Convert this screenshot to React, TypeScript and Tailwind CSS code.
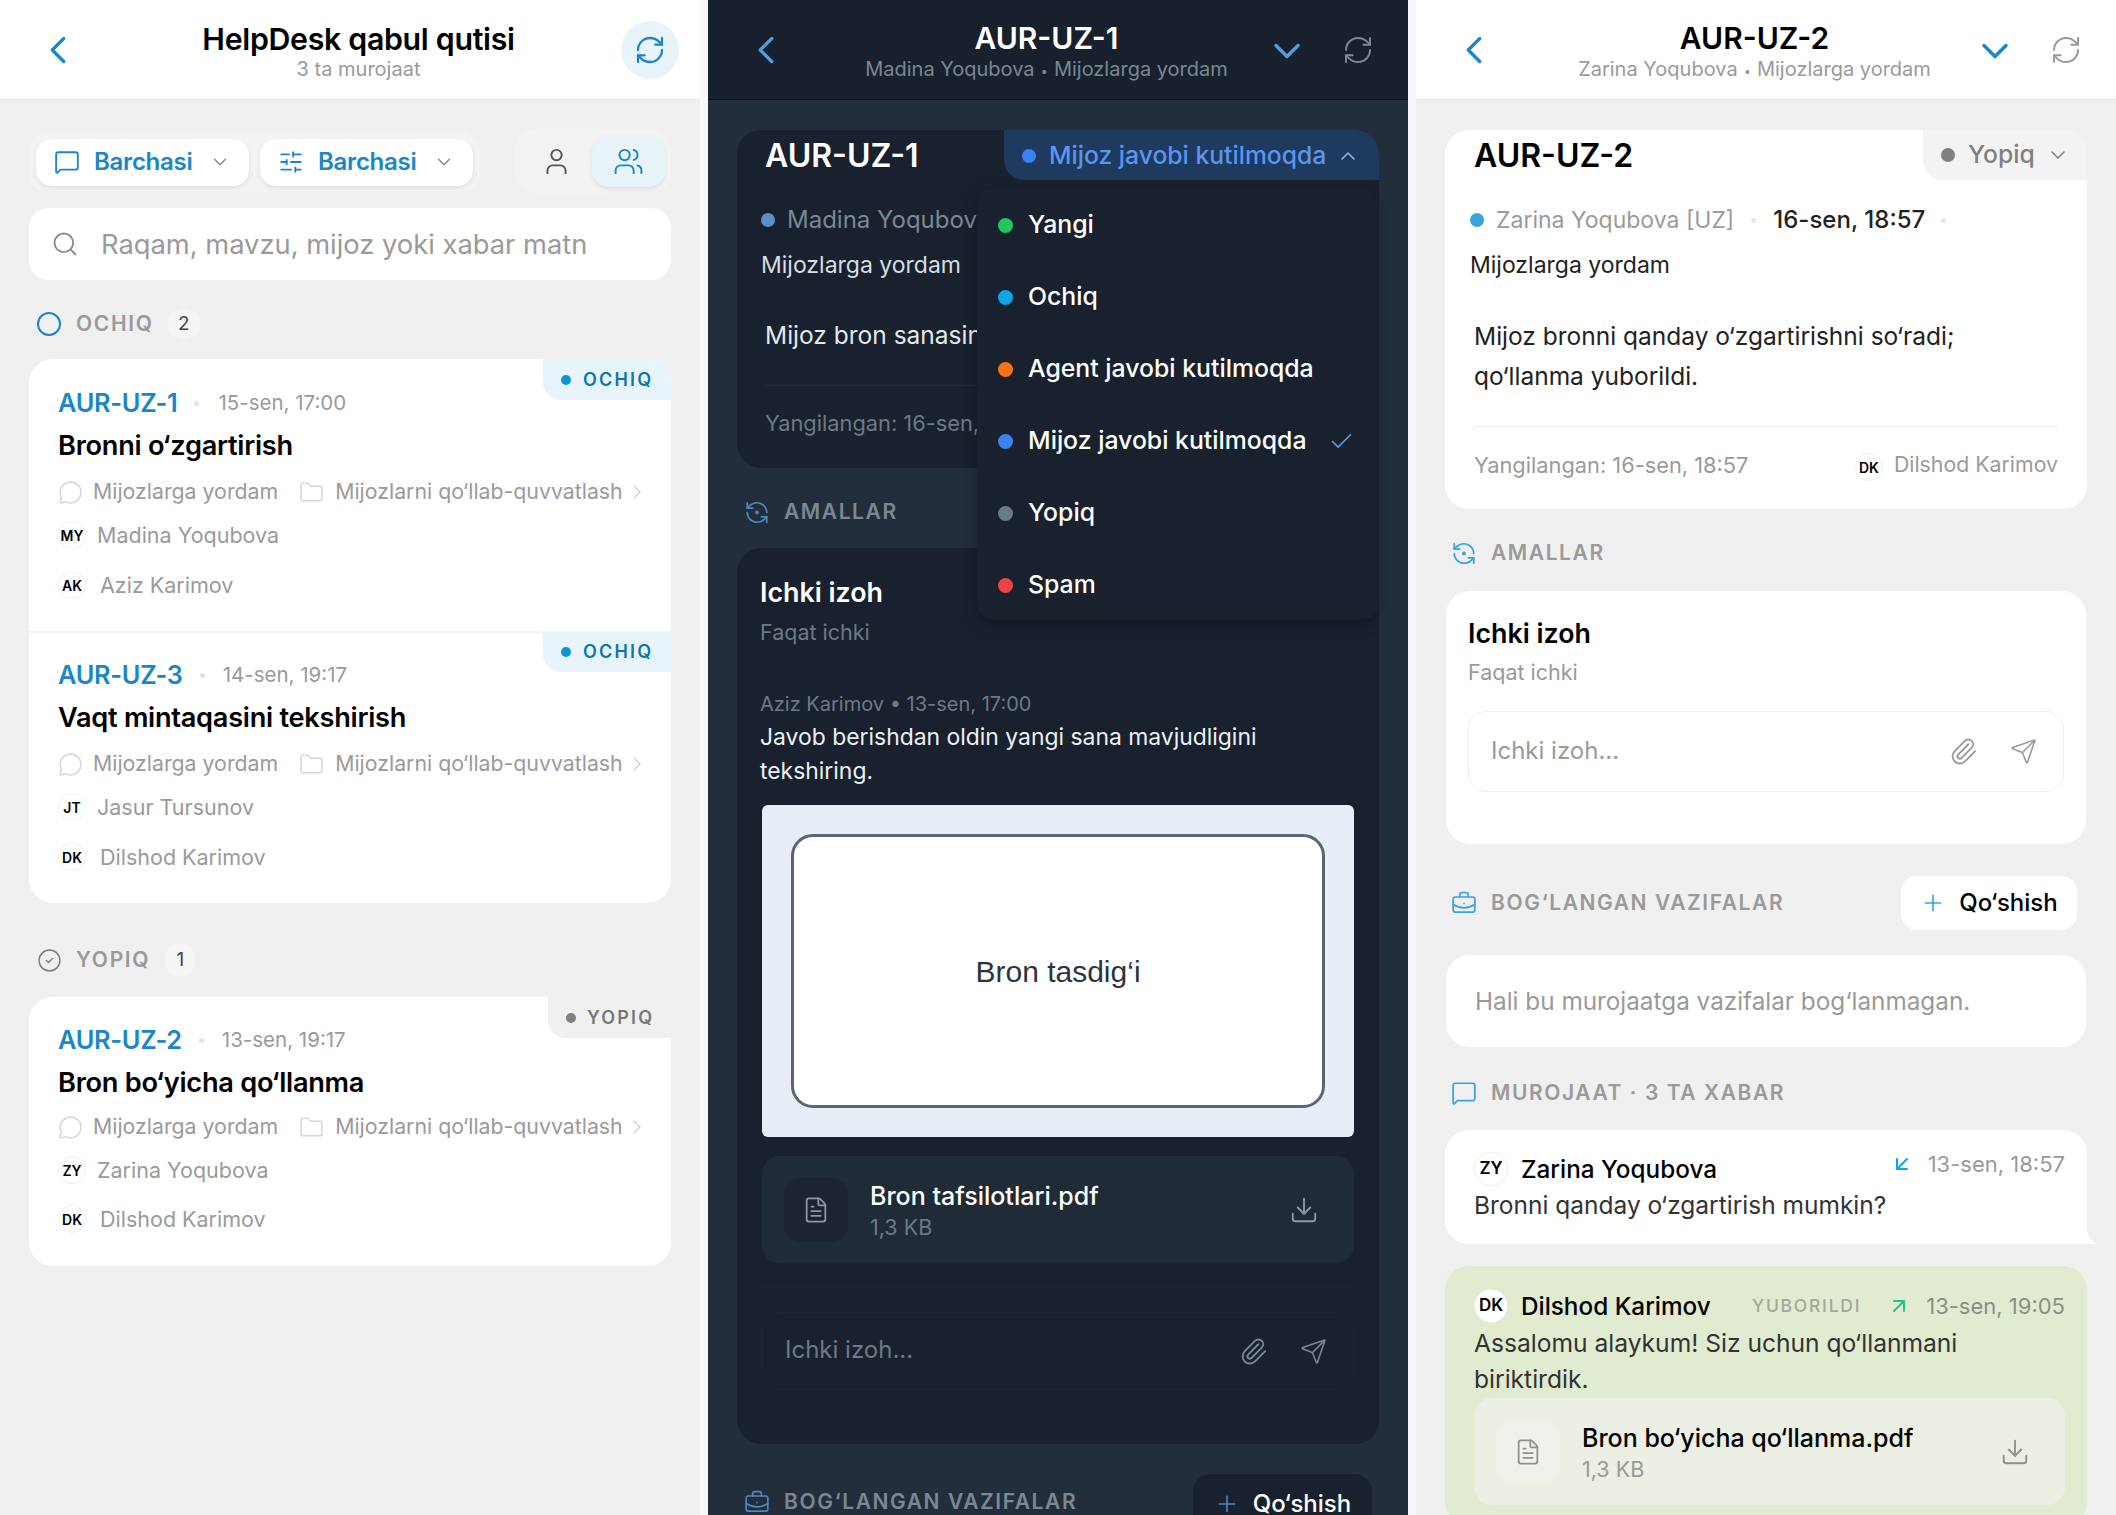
import React from "react";
import {
  ChevronLeft, ChevronDown, ChevronUp, ChevronRight, RefreshCw, MessageSquare, SlidersHorizontal, User, Users, Search,
  MessageCircle, Folder, CircleCheck, RefreshCcwDot, BriefcaseBusiness, Plus, Paperclip, Send, Download, FileText, Check,
  ArrowDownLeft, ArrowUpRight,
} from "lucide-react";

const F = "font-['Inter',sans-serif]";

function Avatar({ t, big }: { t: string; big?: boolean }) {
  return (
    <span className={big
      ? "flex h-[34px] w-[34px] shrink-0 items-center justify-center rounded-full border border-[#eeeeee] bg-white text-[17px] font-semibold text-black"
      : "flex h-[28px] w-[28px] shrink-0 items-center justify-center rounded-full border border-[#f0f0f0] bg-white text-[14px] font-semibold text-black"}>
      {t}
    </span>
  );
}

function Ticket(p: { id: string; date: string; dotGap: string; title: string; a: string; an: string; b: string; bn: string; closed?: boolean; top?: boolean }) {
  return (
    <div className={"relative h-[272px] " + (p.closed ? "pt-[25px] " : "pt-[26px] ") + (p.top ? "" : "shadow-[inset_0_3px_0_#f5f5f5]")}>
      <div className={p.closed
        ? "absolute right-0 top-0 flex h-[41px] w-[123px] items-center gap-[11px] rounded-bl-[18px] bg-[#f0f0f0] pl-[18px] text-[18px] font-semibold tracking-[0.12em] text-[#777777]"
        : "absolute right-0 top-0 flex h-[41px] w-[128px] items-center gap-[12px] rounded-bl-[18px] bg-[#e8f4fb] pl-[18px] text-[18px] font-semibold tracking-[0.12em] text-[#0b76b0]"}>
        <span className={p.closed ? "h-[10px] w-[10px] rounded-full bg-[#808080]" : "h-[10px] w-[10px] rounded-full bg-[#0b93d6]"} />
        {p.closed ? "YOPIQ" : "OCHIQ"}
      </div>
      <div className="flex h-[36px] items-center pl-[29px]">
        <span className="text-[25.3px] font-semibold tracking-[-0.01em] text-[#1a85c8]">{p.id}</span>
        <span className={"h-[5px] w-[5px] rounded-full bg-[#e2e2e2] " + p.dotGap} />
        <span className="text-[20.5px] text-[#9a9a9a]">{p.date}</span>
      </div>
      <div className="mt-[6px] h-[38px] pl-[29px] text-[27.2px] font-semibold leading-[38px] tracking-[-0.01em] text-black">{p.title}</div>
      <div className={(p.closed ? "mt-[10px]" : "mt-[12px]") + " flex h-[30px] items-center pl-[29px] text-[21.3px] text-[#9a9a9a]"}>
        <MessageCircle size={25} strokeWidth={1.4} className="text-[#d4d4d4]" />
        <span className="ml-[10px]">Mijozlarga yordam</span>
        <Folder size={25} strokeWidth={1.4} className="ml-[21px] text-[#d4d4d4]" />
        <span className="ml-[11px] whitespace-nowrap">Mijozlarni qo‘llab-quvvatlash</span>
        <ChevronRight size={24} strokeWidth={1.3} className="ml-[2px] text-[#cfcfcf]" />
      </div>
      <div className={(p.closed ? "mt-[13px]" : "mt-[13px]") + " flex h-[30px] items-center gap-[11px] pl-[29px] text-[21.5px] text-[#9a9a9a]"}>
        <Avatar t={p.an} />
        {p.a}
      </div>
      <div className={(p.closed ? "mt-[19px]" : "mt-[20px]") + " flex h-[30px] items-center gap-[14px] pl-[29px] text-[21.5px] text-[#9a9a9a]"}>
        <Avatar t={p.bn} />
        {p.b}
      </div>
    </div>
  );
}

function InboxPanel() {
  return (
    <div className="flex h-[1515px] w-[700px] shrink-0 flex-col bg-[#f0f0f0]">
      <div className="flex h-[100px] shrink-0 items-center border-b border-[#e6e6e6] bg-white pl-[40px] pr-[21px]">
        <ChevronLeft size={46} strokeWidth={1.7} className="-mx-[5px] text-[#1a85c8]" />
        <div className="flex-1 pl-[20px] text-center">
          <div className="pt-[3px] text-[30.3px] font-semibold leading-[38px] tracking-[-0.01em] text-black">HelpDesk qabul qutisi</div>
          <div className="mt-[-2px] text-[20px] leading-[26px] text-[#9a9a9a]">3 ta murojaat</div>
        </div>
        <div className="flex h-[58px] w-[58px] items-center justify-center rounded-full bg-[#e8f3fa]">
          <RefreshCw size={32} strokeWidth={1.7} className="text-[#1a85c8]" />
        </div>
      </div>
      <div className="px-[29px]">
        <div className="mt-[29px] flex justify-between">
          <div className="mt-[3px] flex h-[60px] w-[451px] items-center gap-[11px] rounded-[20px] bg-[#f3f3f3] px-[7px]">
            {[MessageSquare, SlidersHorizontal].map((I, i) => (
              <div key={i} className="flex h-[47px] w-[213px] items-center rounded-[16px] bg-white pl-[18px] shadow-[0_2px_5px_rgba(0,0,0,0.08)]">
                <I size={26} strokeWidth={1.7} className="text-[#1a85c8]" />
                <span className="ml-[14px] text-[24px] font-semibold tracking-[-0.01em] text-[#1a85c8]">Barchasi</span>
                <ChevronDown size={22} strokeWidth={1.4} className="ml-[16px] text-[#808080]" />
              </div>
            ))}
          </div>
          <div className="flex h-[64px] w-[156px] items-center rounded-[20px] bg-[#f3f3f3] pl-[5px]">
            <div className="flex h-[51px] w-[72px] items-center justify-center">
              <User size={31} strokeWidth={1.5} className="text-[#555555]" />
            </div>
            <div className="flex h-[51px] w-[73px] items-center justify-center rounded-[16px] bg-[#e8f3fa] shadow-[0_2px_4px_rgba(0,0,0,0.08)]">
              <Users size={31} strokeWidth={1.5} className="text-[#1a85c8]" />
            </div>
          </div>
        </div>
        <div className="mt-[15px] flex h-[72px] items-center rounded-[20px] bg-white pl-[22px]">
          <Search size={28} strokeWidth={1.6} className="text-[#8c8c8c]" />
          <div className="ml-[22px] mt-[2px] w-[485px] overflow-hidden whitespace-nowrap text-[27.3px] text-[#9a9a9a]">Raqam, mavzu, mijoz yoki xabar matni</div>
        </div>
        <div className="mt-[29px] flex h-[30px] items-center pl-[8px]">
          <span className="h-[24px] w-[24px] rounded-full border-[2.5px] border-[#1a85c8]" />
          <span className="ml-[15px] text-[21px] font-semibold tracking-[0.08em] text-[#9a9a9a]">OCHIQ</span>
          <span className="ml-[14px] flex h-[32px] w-[32px] items-center justify-center rounded-full bg-[#f5f5f5] text-[19px] text-[#444444]">2</span>
        </div>
        <div className="mt-[20px] overflow-hidden rounded-[24px] bg-white">
          <Ticket top id="AUR-UZ-1" date="15-sen, 17:00" dotGap="ml-[17px] mr-[19px]" title="Bronni o‘zgartirish" a="Madina Yoqubova" an="MY" b="Aziz Karimov" bn="AK" />
          <Ticket id="AUR-UZ-3" date="14-sen, 19:17" dotGap="ml-[17px] mr-[18px]" title="Vaqt mintaqasini tekshirish" a="Jasur Tursunov" an="JT" b="Dilshod Karimov" bn="DK" />
        </div>
        <div className="mt-[42px] flex h-[30px] items-center pl-[8px]">
          <CircleCheck size={25} strokeWidth={1.4} className="text-[#808080]" />
          <span className="ml-[14px] text-[21px] font-semibold tracking-[0.08em] text-[#9a9a9a]">YOPIQ</span>
          <span className="ml-[14px] flex h-[32px] w-[32px] items-center justify-center rounded-full bg-[#f5f5f5] text-[19px] text-[#444444]">1</span>
        </div>
        <div className="mt-[22px] h-[269px] overflow-hidden rounded-[24px] bg-white">
          <Ticket top closed id="AUR-UZ-2" date="13-sen, 19:17" dotGap="ml-[17px] mr-[18px]" title="Bron bo‘yicha qo‘llanma" a="Zarina Yoqubova" an="ZY" b="Dilshod Karimov" bn="DK" />
        </div>
      </div>
    </div>
  );
}

function Header({ dark, id, who }: { dark?: boolean; id: string; who: string }) {
  return (
    <div className={"flex h-[100px] shrink-0 items-center border-b pl-[40px] pr-[34px] " + (dark ? "border-[#10161f] bg-[#17202c]" : "border-[#e6e6e6] bg-white")}>
      <ChevronLeft size={46} strokeWidth={1.7} className={"-mx-[5px] " + (dark ? "text-[#4f9fe0]" : "text-[#1a85c8]")} />
      <div className="flex-1 pl-[44px] text-center">
        <div className={"pt-[3px] text-[30px] font-semibold leading-[38px] " + (dark ? "text-white" : "text-black")}>{id}</div>
        <div className={"mt-[-1px] text-[20px] leading-[26px] " + (dark ? "text-[#7c8794]" : "text-[#9a9a9a]")}>{who}<span className="mx-[6px] text-[13px]">•</span>Mijozlarga yordam</div>
      </div>
      <ChevronDown size={44} strokeWidth={1.9} className={"mt-[3px] " + (dark ? "text-[#4f9fe0]" : "text-[#1a85c8]")} />
      <RefreshCw size={32} strokeWidth={1.5} className={"ml-[33px] " + (dark ? "text-[#7c8794]" : "text-[#9a9a9a]")} />
    </div>
  );
}

function SectionIcon({ dark, children, label, className }: { dark?: boolean; children: React.ReactNode; label: string; className?: string }) {
  return (
    <div className={"flex h-[30px] items-center " + (className || "")}>
      <span className={"flex w-[26px] justify-center " + (dark ? "text-[#4f86bd]" : "text-[#3ba2e0]")}>{children}</span>
      <span className={"ml-[14px] whitespace-nowrap text-[21px] font-semibold tracking-[0.075em] " + (dark ? "text-[#7c8794]" : "text-[#9a9a9a]")}>{label}</span>
    </div>
  );
}

function NoteInput({ dark, h }: { dark?: boolean; h: string }) {
  return (
    <div className={"flex items-center rounded-[18px] border pl-[22px] pr-[26px] " + h + " " + (dark ? "border-[#1c2632] bg-[#18212d]" : "border-[#eeeeee] bg-white")}>
      <span className={"-mt-[2px] flex-1 text-[24px] " + (dark ? "text-[#6e7986]" : "text-[#9a9a9a]")}>Ichki izoh...</span>
      <Paperclip size={29} strokeWidth={1.6} className={dark ? "text-[#7c8794]" : "text-[#9a9a9a]"} />
      <Send size={27} strokeWidth={1.4} className={"ml-[32px] " + (dark ? "text-[#7c8794]" : "text-[#9a9a9a]")} />
    </div>
  );
}

function Attachment({ dark, name }: { dark?: boolean; name: string }) {
  return (
    <div className={"flex h-[107px] items-center rounded-[18px] pl-[22px] pr-[35px] " + (dark ? "bg-[#202b38]" : "bg-[#ebefe4]")}>
      <div className={"flex h-[64px] w-[64px] items-center justify-center rounded-[16px] " + (dark ? "bg-[#1b2430]" : "bg-[#eff2ea]")}>
        <FileText size={28} strokeWidth={1.5} className={dark ? "text-[#8f99a5]" : "text-[#8f8f8f]"} />
      </div>
      <div className="ml-[22px] flex-1 pt-[2px]">
        <div className={"text-[25px] font-medium leading-[32px] " + (dark ? "text-white" : "text-black")}>{name}</div>
        <div className={"text-[21.5px] leading-[30px] " + (dark ? "text-[#6e7986]" : "text-[#9a9a9a]")}>1,3 KB</div>
      </div>
      <Download size={30} strokeWidth={1.5} className={dark ? "text-[#8f99a5]" : "text-[#8f8f8f]"} />
    </div>
  );
}

function MiddlePanel() {
  const items = [
    ["Yangi", "bg-[#22c55e]"],
    ["Ochiq", "bg-[#0ea5e9]"],
    ["Agent javobi kutilmoqda", "bg-[#f97316]"],
    ["Mijoz javobi kutilmoqda", "bg-[#3b82f6]"],
    ["Yopiq", "bg-[#6b7a8a]"],
    ["Spam", "bg-[#ef4444]"],
  ];
  return (
    <div className="relative flex h-[1515px] w-[700px] shrink-0 flex-col overflow-hidden bg-[#232e3c]">
      <Header dark id="AUR-UZ-1" who="Madina Yoqubova" />
      <div className="pl-[29px] pr-[29px] pt-[30px]">
        <div className="relative h-[338px] rounded-[24px] bg-[#18212d]">
          <div className="absolute right-0 top-0 flex h-[50px] w-[375px] items-center rounded-bl-[20px] rounded-tr-[24px] bg-[#1e3a5f] pl-[18px] pt-[1px]">
            <span className="h-[14px] w-[14px] rounded-full bg-[#3b82f6]" />
            <span className="ml-[13px] whitespace-nowrap text-[24.7px] font-medium text-[#5b95ee]">Mijoz javobi kutilmoqda</span>
            <ChevronUp size={24} strokeWidth={1.6} className="ml-[10px] text-[#8fb6ee]" />
          </div>
          <div className="pl-[28px] pt-[7px] text-[32px] font-semibold leading-[38px] text-white">AUR-UZ-1</div>
          <div className="mt-[30px] flex h-[30px] items-center whitespace-nowrap pl-[24px] text-[24px] text-[#7c8794]">
            <span className="h-[14px] w-[14px] rounded-full bg-[#5c8fc7]" />
            <span className="ml-[12px]">Madina Yoqubova</span>
          </div>
          <div className="mt-[15px] h-[30px] pl-[24px] text-[23px] leading-[30px] text-[#d8dde3]">Mijozlarga yordam</div>
          <div className="mt-[36px] overflow-hidden whitespace-nowrap pl-[28px] text-[24.5px] leading-[39px] text-[#e4e8ec]">Mijoz bron sanasini o‘zgartirishni so‘radi.</div>
          <div className="mx-[28px] mt-[30px] border-t border-[#1f2a36]" />
          <div className="mt-[22px] h-[30px] pl-[28px] text-[21.8px] leading-[30px] text-[#6e7986]">Yangilangan: 16-sen, 18:57</div>
        </div>
        <SectionIcon dark className="mt-[29px] pl-[7px]" label="AMALLAR"><RefreshCcwDot size={27} strokeWidth={1.6} /></SectionIcon>
        <div className="mt-[21px] h-[896px] rounded-[24px] bg-[#18212d] px-[23px] pt-[27px]">
          <div className="h-[34px] text-[26.8px] font-semibold leading-[34px] text-white">Ichki izoh</div>
          <div className="mt-[9px] h-[28px] text-[21.5px] leading-[28px] text-[#6e7986]">Faqat ichki</div>
          <div className="mt-[45px] h-[26px] text-[20px] leading-[26px] text-[#6e7986]">Aziz Karimov • 13-sen, 17:00</div>
          <div className="mt-[3px] w-[560px] text-[22.9px] leading-[34px] text-[#eef1f4]">Javob berishdan oldin yangi sana mavjudligini tekshiring.</div>
          <div className="ml-[2px] mt-[17px] flex h-[332px] w-[592px] items-center justify-center rounded-[6px] bg-[#e8eef8]">
            <div className="flex h-[274px] w-[534px] items-center justify-center rounded-[22px] border-[3px] border-[#5b6573] bg-white font-['Liberation_Sans',sans-serif] text-[30px] text-[#2b3440]">Bron tasdig‘i</div>
          </div>
          <div className="ml-[2px] mt-[19px] w-[592px]"><Attachment dark name="Bron tafsilotlari.pdf" /></div>
          <div className="ml-[2px] mt-[23px] w-[592px] border-t border-[#1c2632]" />
          <div className="ml-[2px] mt-[25px] w-[592px]"><NoteInput dark h="h-[78px]" /></div>
        </div>
        <div className="relative mt-[30px] flex h-[60px] items-start justify-between">
          <SectionIcon dark className="mt-[13px] pl-[7px]" label="BOG‘LANGAN VAZIFALAR"><BriefcaseBusiness size={27} strokeWidth={1.6} /></SectionIcon>
          <div className="mr-[7px] flex h-[60px] w-[179px] items-center justify-center gap-[13px] rounded-[18px] bg-[#18212d] text-[24px] font-medium text-white">
            <Plus size={26} strokeWidth={1.5} className="text-[#4f86bd]" />Qo‘shish
          </div>
        </div>
      </div>
      <div className="absolute left-[269px] top-[188px] h-[432px] w-[402px] rounded-[18px] bg-[#18212d] pl-[21px] pt-[1px] shadow-[0_4px_14px_rgba(0,0,0,0.25)]">
        {items.map(([t, c], i) => (
          <div key={t} className="flex h-[72px] items-center text-[24.8px] font-medium text-white">
            <span className={"h-[15px] w-[15px] rounded-full " + c} />
            <span className="ml-[15px] flex-1">{t}</span>
            {i === 3 && <Check size={27} strokeWidth={1.5} className="mr-[24px] text-[#5b95ee]" />}
          </div>
        ))}
      </div>
    </div>
  );
}

function RightPanel() {
  return (
    <div className="flex h-[1515px] w-[700px] shrink-0 flex-col overflow-hidden bg-[#f0f0f0]">
      <Header id="AUR-UZ-2" who="Zarina Yoqubova" />
      <div className="px-[29px] pt-[30px]">
        <div className="relative h-[379px] rounded-[24px] bg-white">
          <div className="absolute right-0 top-0 flex h-[50px] w-[164px] items-center rounded-bl-[20px] rounded-tr-[24px] bg-[#f3f3f3] pl-[18px]">
            <span className="h-[14px] w-[14px] rounded-full bg-[#808080]" />
            <span className="ml-[13px] text-[24.7px] font-medium text-[#808080]">Yopiq</span>
            <ChevronDown size={24} strokeWidth={1.5} className="ml-[11px] text-[#808080]" />
          </div>
          <div className="pl-[29px] pt-[7px] text-[32px] font-semibold leading-[38px] text-black">AUR-UZ-2</div>
          <div className="mt-[30px] flex h-[30px] items-center whitespace-nowrap pl-[25px] text-[23px] text-[#9a9a9a]">
            <span className="h-[14px] w-[14px] rounded-full bg-[#3ba2e0]" />
            <span className="ml-[12px]">Zarina Yoqubova [UZ]</span>
            <span className="ml-[17px] h-[5px] w-[5px] rounded-full bg-[#e6e6e6]" />
            <span className="ml-[17px] text-[24px] font-medium text-[#222222]">16-sen, 18:57</span>
            <span className="ml-[16px] h-[5px] w-[5px] rounded-full bg-[#e6e6e6]" />
          </div>
          <div className="mt-[15px] h-[30px] pl-[25px] text-[23px] leading-[30px] text-[#222222]">Mijozlarga yordam</div>
          <div className="mt-[36px] pl-[29px] text-[24.5px] leading-[40px] text-[#222222]">Mijoz bronni qanday o‘zgartirishni so‘radi;<br />qo‘llanma yuborildi.</div>
          <div className="mx-[29px] mt-[30px] border-t border-[#eeeeee]" />
          <div className="mx-[29px] mt-[23px] flex h-[30px] items-center justify-between text-[21.8px] text-[#9a9a9a]">
            <span>Yangilangan: 16-sen, 18:57</span>
            <span className="flex items-center gap-[11px] text-[21.3px]"><span className="mt-[4px]"><Avatar t="DK" /></span>Dilshod Karimov</span>
          </div>
        </div>
        <SectionIcon className="mt-[29px] pl-[6px]" label="AMALLAR"><RefreshCcwDot size={27} strokeWidth={1.6} /></SectionIcon>
        <div className="mx-[1px] mt-[23px] h-[253px] rounded-[24px] bg-white px-[22px] pt-[25px]">
          <div className="h-[34px] text-[26.8px] font-semibold leading-[34px] text-black">Ichki izoh</div>
          <div className="mt-[8px] h-[28px] text-[21.5px] leading-[28px] text-[#9a9a9a]">Faqat ichki</div>
          <div className="mt-[25px]"><NoteInput h="h-[81px]" /></div>
        </div>
        <div className="mt-[32px] flex h-[54px] items-center justify-between">
          <SectionIcon className="pl-[6px]" label="BOG‘LANGAN VAZIFALAR"><BriefcaseBusiness size={27} strokeWidth={1.6} /></SectionIcon>
          <div className="mr-[10px] flex h-[54px] w-[176px] items-center justify-center gap-[13px] rounded-[16px] bg-white text-[24px] font-medium text-black">
            <Plus size={26} strokeWidth={1.5} className="text-[#3ba2e0]" />Qo‘shish
          </div>
        </div>
        <div className="mx-[1px] mt-[25px] flex h-[92px] items-center rounded-[24px] bg-white pl-[29px] text-[24.3px] text-[#9a9a9a]">Hali bu murojaatga vazifalar bog‘lanmagan.</div>
        <SectionIcon className="mt-[31px] pl-[6px]" label="MUROJAAT · 3 TA XABAR"><MessageSquare size={26} strokeWidth={1.6} /></SectionIcon>
        <div className="relative mt-[22px] h-[114px] rounded-[24px] rounded-br-none bg-white pl-[29px] pr-[22px]">
          <div className="flex h-[78px] items-center">
            <Avatar big t="ZY" />
            <span className="ml-[13px] text-[24.3px] font-medium text-black">Zarina Yoqubova</span>
            <ArrowDownLeft size={24} strokeWidth={2} className="-mt-[10px] ml-auto text-[#0ea5e9]" />
            <span className="-mt-[10px] ml-[14px] text-[22px] text-[#9a9a9a]">13-sen, 18:57</span>
          </div>
          <div className="-mt-[18px] text-[24.5px] leading-[30px] text-[#333333]">Bronni qanday o‘zgartirish mumkin?</div>
          <svg className="absolute -right-[11px] bottom-0" width="11" height="14" viewBox="0 0 11 14"><path d="M0 0 C1 7 5 12 11 14 L0 14 Z" fill="#ffffff" /></svg>
        </div>
        <div className="mt-[22px] h-[260px] rounded-[24px] bg-[#e1ebcf] pl-[29px] pr-[22px] pt-[23px]">
          <div className="flex h-[34px] items-center">
            <Avatar big t="DK" />
            <span className="ml-[13px] text-[24.3px] font-medium text-black">Dilshod Karimov</span>
            <span className="ml-auto text-[17.5px] font-medium tracking-[0.1em] text-[#a3a89a]">YUBORILDI</span>
            <ArrowUpRight size={24} strokeWidth={2} className="ml-[26px] text-[#22c58e]" />
            <span className="ml-[15px] text-[22px] text-[#8c8f86]">13-sen, 19:05</span>
          </div>
          <div className="mt-[2px] text-[24.6px] leading-[36px] text-[#333333]">Assalomu alaykum! Siz uchun qo‘llanmani biriktirdik.</div>
          <div className="mt-[1px]"><Attachment name="Bron bo‘yicha qo‘llanma.pdf" /></div>
        </div>
      </div>
    </div>
  );
}

export default function App() {
  return (
    <div className={"flex h-[1515px] w-[2116px] gap-[8px] overflow-hidden bg-[#f6f8fb] " + F}>
      <InboxPanel />
      <MiddlePanel />
      <RightPanel />
    </div>
  );
}
